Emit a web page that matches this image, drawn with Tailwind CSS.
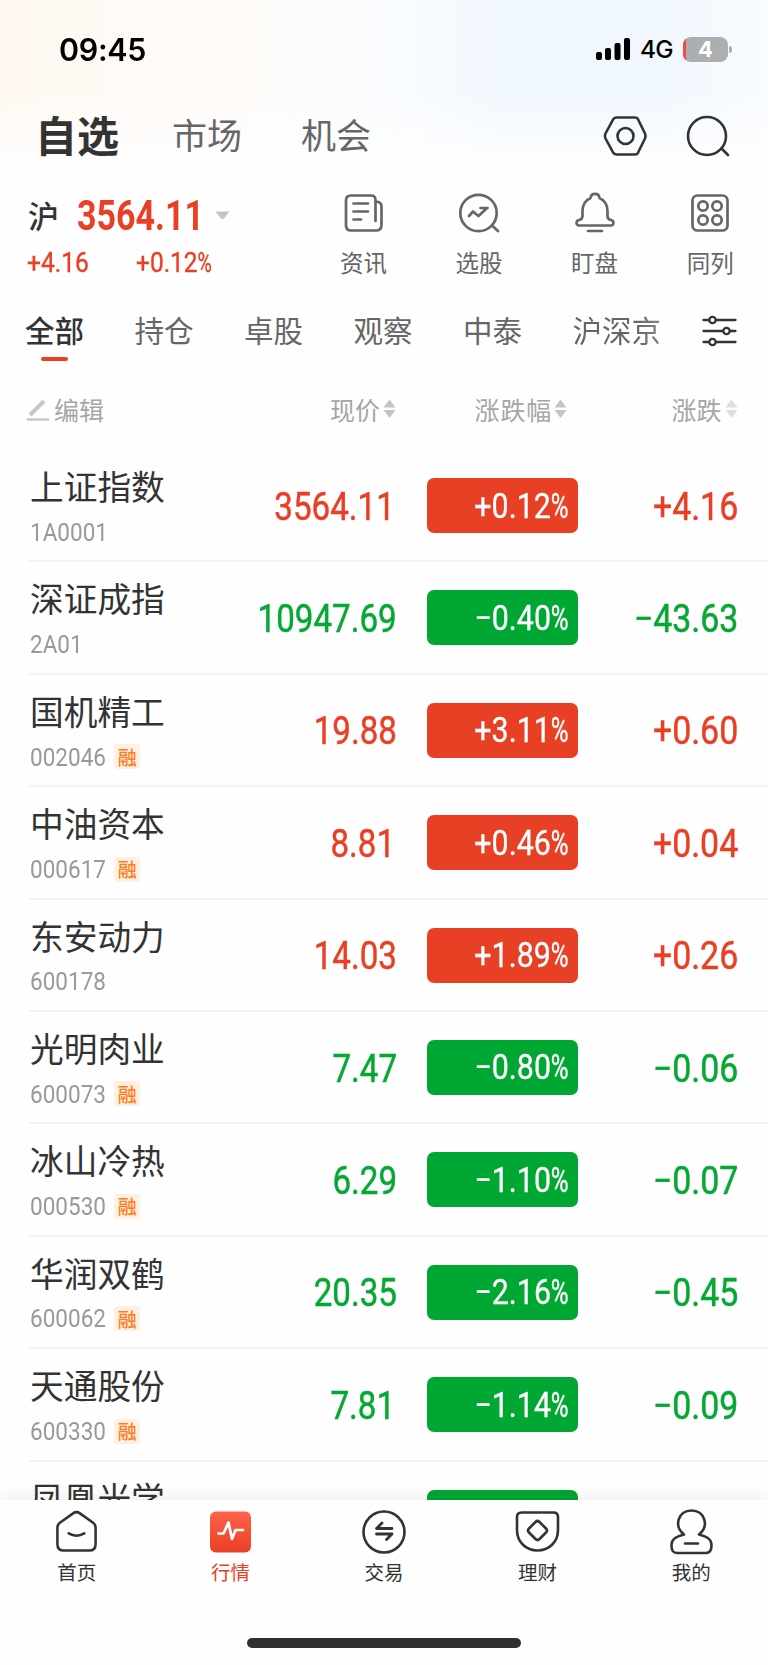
<!DOCTYPE html>
<html lang="zh-CN">
<head>
<meta charset="utf-8">
<title>自选行情</title>
<script src="https://cdn.jsdelivr.net/npm/@tailwindcss/browser@4"></script>
</head>
<body class="bg-white">
<div class="relative flex h-[1665px] w-[768px] flex-col overflow-hidden bg-[#fefefe] font-['Noto_Sans_CJK_SC',sans-serif] text-[#333]">

  <header class="h-[180px] shrink-0 bg-[linear-gradient(to_bottom,transparent_0,transparent_90px,#fefefe_168px),linear-gradient(to_right,#fff8f1_0,#fffaf6_150px,#fefcfa_270px,#f8fbff_410px,#f0f7fe_510px,#f0f7fe_650px,#f8fbff_768px)]">
    <div class="flex h-[96px] items-center justify-between pt-[2px] pr-[36px] pl-[59px]">
      <div class="origin-left scale-x-[.98] font-[Inter,sans-serif] text-[31px] leading-none font-semibold tracking-[-0.3px] text-black">09:45</div>
      <div class="flex items-center">
        <svg class="h-[24px] w-[36px]" viewBox="0 0 36 24" fill="#000"><rect x="0" y="15" width="6" height="8" rx="2"/><rect x="9" y="11" width="6" height="12" rx="2"/><rect x="18.500" y="6" width="6" height="17" rx="2"/><rect x="28" y="1" width="6" height="22" rx="2"/></svg>
        <span class="ml-[8px] w-[34px] font-[Inter,sans-serif] text-[24.500px] leading-none font-medium tracking-[-0.8px] text-black">4G</span>
        <span class="relative ml-[9px] flex h-[25px] w-[45px] items-center justify-center overflow-hidden rounded-[8px] bg-[#acaeb0] font-[Inter,sans-serif] text-[22px] leading-none font-bold text-white"><span class="absolute inset-y-0 left-0 w-[3px] bg-[#f5483f]"></span>4</span>
        <span class="ml-[1px] h-[7px] w-[3px] rounded-r-full bg-[#acaeb0]"></span>
      </div>
    </div>
    <nav class="flex h-[80px] items-center pr-[38px] pl-[35px]">
      <div class="mt-[-4px] w-[137px] text-[42px] leading-none font-bold">自选</div>
      <div class="mt-[-5px] w-[129px] text-[35px] leading-none text-[#666]">市场</div>
      <div class="mt-[-5px] text-[35px] leading-none text-[#666]">机会</div>
      <svg class="ml-auto h-[44px] w-[46px]" viewBox="0 0 46 44" fill="none" stroke="#333" stroke-width="2.600" stroke-linejoin="round"><path d="M14.500 3.500H33Q35 3.500 36 5.200L43 19.500Q44.200 22 43 24.500L36 38.800Q35 40.500 33 40.500H14.500Q12.500 40.500 11.300 38.800L3.500 24.500Q2.200 22 3.500 19.500L11.300 5.200Q12.500 3.500 14.500 3.500Z"/><circle cx="23.500" cy="22" r="8"/></svg>
      <svg class="ml-[38px] h-[44px] w-[44px]" viewBox="0 0 44 44" fill="none" stroke="#333" stroke-width="2.600" stroke-linecap="round"><circle cx="21" cy="22" r="19"/><path d="M35.500 34.500L42 41"/></svg>
    </nav>
  </header>

  <section class="flex h-[110px] shrink-0 pt-[11px]">
    <div class="w-[306px] pl-[27px]">
      <div class="flex h-[49px] items-center">
        <span class="mt-[-3px] ml-px w-[49px] text-[31px] leading-none font-medium">沪</span>
        <span class="w-[137px] origin-left scale-x-[.81] font-[Roboto,sans-serif] text-[42px] leading-none font-bold text-[#e93f24]">3564.11</span>
        <svg class="h-[9px] w-[17px]" viewBox="0 0 17 9" fill="#c4c4c4"><path d="M1.500 0.500H15.500L10 7.500Q8.500 9 7 7.500Z"/></svg>
      </div>
      <div class="flex h-[46px] items-center font-[Roboto,sans-serif] text-[27.500px] leading-none text-[#e93f24] [-webkit-text-stroke:0.4px]">
        <span class="w-[109px] origin-left scale-x-[.895]">+4.16</span>
        <span class="origin-left scale-x-[.89]">+0.12<span class="inline-block origin-left scale-x-[.8]">%</span></span>
      </div>
    </div>
    <div class="flex text-center text-[23.500px] leading-none text-[#666]">
      <div class="flex w-[115.600px] flex-col items-center gap-[16px]"><svg class="size-[44px]" viewBox="0 0 44 44" fill="none" stroke="#666" stroke-width="2.700" stroke-linecap="round" stroke-linejoin="round"><path d="M34.500 30V9Q34.500 4.500 30 4.500H10Q5 4.500 5 9.500V34.500Q5 39.500 10 39.500H35Q40.500 39.500 40.500 34V15Q40.500 11 34.500 10.500M12.500 12.500H27M12.500 20.500H27M12.500 28.500H20"/></svg><span>资讯</span></div>
      <div class="flex w-[115.600px] flex-col items-center gap-[16px]"><svg class="size-[44px]" viewBox="0 0 44 44" fill="none" stroke="#666" stroke-width="2.700" stroke-linecap="round" stroke-linejoin="round"><circle cx="21.500" cy="22" r="18.200"/><path d="M35 34.500L41 40M12 25L16 20.500L21.500 25L29 18M23.500 17H30.500"/></svg><span>选股</span></div>
      <div class="flex w-[115.600px] flex-col items-center gap-[16px]"><svg class="size-[44px]" viewBox="0 0 44 44" fill="none" stroke="#666" stroke-width="2.700" stroke-linecap="round" stroke-linejoin="round"><path d="M17.500 7C18 1.500 26 1.500 26.500 7C33 10 34.500 15 34.500 20V25C34.500 27.500 35.500 28.500 38 29C41 29.500 41.500 34.500 38 34.500H6C2.500 34.500 3 29.500 6 29C8.500 28.500 9.500 27.500 9.500 25V20C9.500 15 11 10 17.500 7ZM15 40H29"/></svg><span>盯盘</span></div>
      <div class="flex w-[115.600px] flex-col items-center gap-[16px]"><svg class="size-[44px]" viewBox="0 0 44 44" fill="none" stroke="#666" stroke-width="2.700"><rect x="4.500" y="4.500" width="35" height="35" rx="5"/><circle cx="15" cy="15" r="4.700"/><circle cx="29" cy="15" r="4.700"/><circle cx="15" cy="29" r="4.700"/><circle cx="29" cy="29" r="4.700"/></svg><span>同列</span></div>
    </div>
  </section>

  <nav class="flex h-[96px] shrink-0 pt-[25px] pl-[25px] text-[29.500px] leading-none text-[#666]">
    <div class="relative w-[109.500px] font-medium text-[#333]">全部<span class="absolute top-[41.500px] left-[16px] h-[4px] w-[27px] rounded-full bg-[#e93f24]"></span></div>
    <div class="w-[109.500px]">持仓</div>
    <div class="w-[109.500px]">卓股</div>
    <div class="w-[109.500px]">观察</div>
    <div class="w-[109.500px]">中泰</div>
    <div class="w-[127px] bg-linear-to-r from-[#666] from-50% to-[#bbb] bg-clip-text text-transparent">沪深京</div>
    <svg class="h-[32px] w-[38px]" viewBox="0 0 38 32" fill="#fefefe" stroke="#333" stroke-width="2.300" stroke-linecap="round"><path d="M3.500 5H35.500M3.500 16H35.500M3.500 27H35.500"/><circle cx="12.500" cy="5" r="3.200"/><circle cx="26.500" cy="16" r="3.200"/><circle cx="12.500" cy="27" r="3.200"/></svg>
  </nav>

  <div class="flex h-[64px] shrink-0 pt-[11px] text-[25px] leading-none text-[#a6a6a6]">
    <div class="flex w-[180px] gap-[4px] pl-[27px]"><svg class="mt-px h-[24px] w-[23px]" viewBox="0 0 23 24" fill="none" stroke="#c8c8c8"><path stroke-width="4" d="M3 17L17 3"/><path stroke-width="2.500" d="M0 21.500H22"/></svg>编辑</div>
    <div class="flex w-[216px] justify-end gap-[3px]">现价<svg class="mt-[2px] h-[20px] w-[13px]" viewBox="0 0 13 20" fill="#c4c4c4"><path d="M6.500 0.500L12.500 8.500H0.500ZM6.500 19L0.500 11H12.500Z"/></svg></div>
    <div class="flex w-[171px] justify-end gap-[2px]"><span class="tracking-[0.800px]">涨跌幅</span><svg class="mt-[2px] h-[20px] w-[13px]" viewBox="0 0 13 20" fill="#c4c4c4"><path d="M6.500 0.500L12.500 8.500H0.500ZM6.500 19L0.500 11H12.500Z"/></svg></div>
    <div class="flex w-[170.500px] justify-end gap-[3px]">涨跌<svg class="mt-[2px] h-[20px] w-[13px]" viewBox="0 0 13 20" fill="#dedede"><path d="M6.500 0.500L12.500 8.500H0.500ZM6.500 19L0.500 11H12.500Z"/></svg></div>
  </div>

  <main id="list" class="h-[1050px] shrink-0 overflow-hidden"></main>

  <footer class="relative h-[165px] shrink-0 bg-[#fefefe] shadow-[0_-2px_18px_rgba(0,0,0,0.07)]">
    <div class="flex pt-[8px] text-[19.500px] leading-none text-[#333]">
      <div class="flex w-[153.600px] flex-col items-center gap-[7px]"><svg class="size-[47px]" viewBox="0 0 48 48" fill="none" stroke="#333" stroke-width="2.600" stroke-linecap="round" stroke-linejoin="round"><path d="M20.500 5.500Q24 3 27.500 5.500L41 15Q43.500 17 43.500 20V37Q43.500 43.500 37 43.500H11Q4.500 43.500 4.500 37V20Q4.500 17 7 15ZM16 26Q24 30.500 32 26"/></svg><span>首页</span></div>
      <div class="flex w-[153.600px] flex-col items-center gap-[7px] text-[#e93f24]"><svg class="size-[47px]" viewBox="0 0 47 47" fill="none"><defs><linearGradient id="g" x1="0" y1="0" x2="0" y2="1"><stop stop-color="#ff634b"/><stop offset="1" stop-color="#e93f24"/></linearGradient></defs><rect x="3" y="3.500" width="41" height="41" rx="6" fill="url(#g)"/><path stroke="#fff" stroke-width="2.700" stroke-linecap="round" stroke-linejoin="round" d="M11.500 25.500H16.500L21.500 14.500L25 31L28.500 22H36"/></svg><span>行情</span></div>
      <div class="flex w-[153.600px] flex-col items-center gap-[7px]"><svg class="size-[47px]" viewBox="0 0 47 47" fill="none" stroke="#333" stroke-width="2.600" stroke-linecap="round" stroke-linejoin="round"><circle cx="24" cy="24" r="20.500"/><path stroke-width="2.800" d="M32 20.500H16.500L22 15M16.500 26H32L26.500 31.500"/></svg><span>交易</span></div>
      <div class="flex w-[153.600px] flex-col items-center gap-[7px]"><svg class="size-[47px]" viewBox="0 0 47 47" fill="none" stroke="#333" stroke-width="2.600" stroke-linecap="round" stroke-linejoin="round"><path d="M7.500 4.500H39.500Q44 4.500 44 9V22C44 34 35 42.500 23.500 42.500S3 34 3 22V9Q3 4.500 7.500 4.500Z"/><path d="M21.500 14Q23.500 12 25.500 14L32 20.500Q34 22.500 32 24.500L25.500 31Q23.500 33 21.500 31L15 24.500Q13 22.500 15 20.500Z"/></svg><span>理财</span></div>
      <div class="flex w-[153.600px] flex-col items-center gap-[7px]"><svg class="size-[47px]" viewBox="0 0 47 47" fill="none" stroke="#333" stroke-width="2.600" stroke-linecap="round" stroke-linejoin="round"><path d="M16 26.500C5.500 18 10 2.500 23.500 2.500S41.500 18 31 26.500C37 28 43.500 30 43.500 37.500C43.500 42.500 42 45 38 45H9C5 45 3.500 42.500 3.500 37.500C3.500 30 10 28 16 26.500ZM17 35.500H30"/></svg><span>我的</span></div>
    </div>
    <div class="mx-auto mt-[56px] h-[10px] w-[274px] rounded-full bg-[#303030]"></div>
  </footer>
</div>
<script>
const rows = [
  ['上证指数', '1A0001', 0, '3564.11', '+0.12', '+4.16'],
  ['深证成指', '2A01', 0, '10947.69', '−0.40', '−43.63'],
  ['国机精工', '002046', 1, '19.88', '+3.11', '+0.60'],
  ['中油资本', '000617', 1, '8.81', '+0.46', '+0.04'],
  ['东安动力', '600178', 0, '14.03', '+1.89', '+0.26'],
  ['光明肉业', '600073', 1, '7.47', '−0.80', '−0.06'],
  ['冰山冷热', '000530', 1, '6.29', '−1.10', '−0.07'],
  ['华润双鹤', '600062', 1, '20.35', '−2.16', '−0.45'],
  ['天通股份', '600330', 1, '7.81', '−1.14', '−0.09'],
  ['凤凰光学', '', 0, '', '', '']
];
document.getElementById('list').innerHTML = rows.map(([name, code, margin, price, pct, diff]) => {
  const up = pct[0] === '+';
  const text = up ? 'text-[#e93f24]' : 'text-[#05a833]';
  const fill = up ? 'bg-[#e84024]' : 'bg-[#00a732]';
  const nudge = price.endsWith('1') ? 'mr-[2px]' : '';
  return `<div class="ml-[29px] flex h-[112.400px] border-b-2 border-[#f2f2f2]">
    <div class="w-[190px] pt-[19px] pl-px">
      <div class="text-[33.700px] leading-[34px] whitespace-nowrap">${name}</div>
      <div class="mt-[16px] flex h-[26px] items-center"><span class="origin-left scale-x-[.85] font-[Roboto,sans-serif] text-[26.500px] leading-none text-[#999]">${code}</span>${margin ? '<span class="ml-[-5px] flex h-[25px] w-[26px] items-center justify-center rounded-[3px] bg-[#fff0e3] pb-px text-[19px] leading-none font-medium text-[#ff7a1a]">融</span>' : ''}</div>
    </div>
    <div class="flex w-[178px] items-center justify-end pt-[4px]"><span class="origin-right scale-x-[.85] font-[Roboto,sans-serif] text-[39px] leading-none [-webkit-text-stroke:0.5px] ${text} ${nudge}">${price}</span></div>
    <div class="mt-[28px] ml-[30px] flex h-[55px] w-[151px] items-center justify-end rounded-[7px] pt-px pr-[9px] ${fill}"><span class="origin-right scale-x-[.868] font-[Roboto,sans-serif] text-[35px] leading-none text-white [-webkit-text-stroke:0.3px]">${pct}${pct ? '<span class="mr-[-5px] inline-block origin-left scale-x-[.8]">%</span>' : ''}</span></div>
    <div class="flex w-[160px] items-center justify-end pt-[4px]"><span class="origin-right scale-x-[.868] font-[Roboto,sans-serif] text-[39px] leading-none [-webkit-text-stroke:0.5px] ${text}">${diff}</span></div>
  </div>`;
}).join('');
</script>
</body>
</html>
